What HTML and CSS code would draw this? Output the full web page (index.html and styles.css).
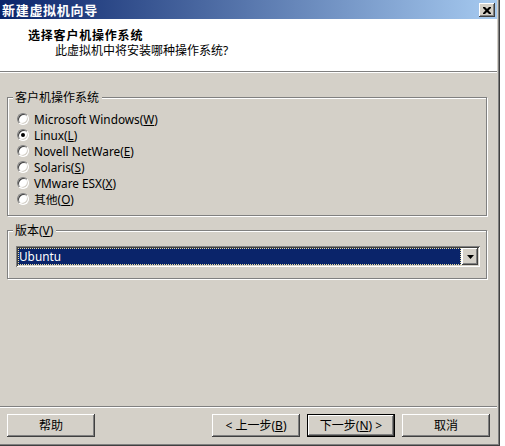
FILE: index.html
```html
<!DOCTYPE html>
<html>
<head>
<meta charset="utf-8">
<link rel="stylesheet" href="styles.css">
</head>
<body>
<div class="window">
  <div class="titlebar">
    <span class="title">新建虚拟机向导</span>
    <span class="close"><svg width="8" height="7" viewBox="0 0 8 7"><path d="M0 0h2l2 2 2-2h2v1l-2.5 2.5L8 6v1H6L4 5 2 7H0V6l2.5-2.5L0 1z" fill="#000"/></svg></span>
  </div>
  <div class="header">
    <div class="h-title">选择客户机操作系统</div>
    <div class="h-sub">此虚拟机中将安装哪种操作系统?</div>
  </div>
  <div class="content">
    <div class="group g1">
      <div class="legend">客户机操作系统</div>
      <div class="radios">
        <div class="radio"><span class="dot"></span><span class="lbl">Microsoft Windows(<u>W</u>)</span></div>
        <div class="radio"><span class="dot on"></span><span class="lbl">Linux(<u>L</u>)</span></div>
        <div class="radio"><span class="dot"></span><span class="lbl">Novell NetWare(<u>E</u>)</span></div>
        <div class="radio"><span class="dot"></span><span class="lbl">Solaris(<u>S</u>)</span></div>
        <div class="radio"><span class="dot"></span><span class="lbl">VMware ESX(<u>X</u>)</span></div>
        <div class="radio"><span class="dot"></span><span class="lbl">其他(<u>O</u>)</span></div>
      </div>
    </div>
    <div class="group g2">
      <div class="legend">版本(<u>V</u>)</div>
      <div class="combo">
        <div class="sel">Ubuntu</div>
        <div class="drop"><svg width="7" height="4" viewBox="0 0 7 4"><path d="M0 0h7L3.5 4z" fill="#000"/></svg></div>
      </div>
    </div>
  </div>
  <div class="footer">
    <div class="btn">帮助</div>
    <div class="spacer"></div>
    <div class="btn">&lt; 上一步(<u>B</u>)</div>
    <div class="btn def">下一步(<u>N</u>) &gt;</div>
    <div class="btn">取消</div>
  </div>
</div>
</body>
</html>
```
FILE: styles.css
```css
html, body {
  margin: 0;
  padding: 0;
  background: #fff;
}
body {
  font-family: "Noto Sans", "Noto Sans CJK SC", sans-serif;
  font-size: 12px;
  color: #000;
}
.window {
  width: 500px;
  height: 446px;
  box-sizing: border-box;
  padding: 0 3px 3px 0;
  background: #d4d0c8;
  box-shadow: inset -1px -1px 0 #404040, inset -2px -2px 0 #808080;
  display: flex;
  flex-direction: column;
}
.titlebar {
  height: 19px;
  flex: none;
  display: flex;
  align-items: flex-start;
  padding: 0 2px 0 2px;
  background: linear-gradient(to right, #0a246a, #a6caf0);
}
.title {
  flex: 1;
  color: #fff;
  font-family: "Noto Sans CJK SC", sans-serif;
  font-weight: bold;
  font-size: 13px;
  letter-spacing: 0.7px;
  line-height: 19px;
}
.close {
  margin-top: 3px;
  width: 16px;
  height: 14px;
  box-sizing: border-box;
  background: #d4d0c8;
  box-shadow: inset -1px -1px 0 #404040, inset 1px 1px 0 #fff, inset -2px -2px 0 #808080;
  display: flex;
  align-items: center;
  justify-content: center;
}
.header {
  height: 53px;
  flex: none;
  box-sizing: border-box;
  background: #fff;
  border-bottom: 1px solid #808080;
  padding: 9px 0 0 28px;
}
.h-title {
  font-family: "Noto Sans CJK SC", sans-serif;
  font-weight: bold;
  font-size: 12px;
  letter-spacing: 0.8px;
  line-height: 14px;
}
.h-sub {
  margin: 2px 0 0 27px;
  font-size: 12px;
  line-height: 14px;
}
.content {
  flex: 1;
  border-top: 1px solid #fff;
  padding: 24px 0 0 7px;
}
.group {
  width: 480px;
  box-sizing: border-box;
  border: 1px solid #808080;
  box-shadow: 1px 1px 0 #fff, inset 1px 1px 0 #fff;
}
.g1 { height: 119px; }
.g2 { height: 49px; margin-top: 14px; }
.legend {
  width: fit-content;
  margin: -7px 0 0 5px;
  padding: 0 3px 0 2px;
  height: 13px;
  line-height: 13px;
  background: #d4d0c8;
  font-size: 12px;
}
.radios {
  margin-top: 7px;
}
.radio {
  height: 16px;
  display: flex;
  align-items: center;
  padding-left: 9px;
}
.dot {
  width: 12px;
  height: 12px;
  box-sizing: border-box;
  border-radius: 50%;
  border: 1px solid;
  border-color: #808080 #fff #fff #808080;
  background: #fff;
  box-shadow: inset 1px 1px 0 #404040, inset -1px -1px 0 #d4d0c8;
  display: flex;
  align-items: center;
  justify-content: center;
}
.dot.on::after {
  content: "";
  width: 4px;
  height: 4px;
  border-radius: 50%;
  background: #000;
}
.lbl {
  margin-left: 5px;
  font-size: 11.8px;
  line-height: 16px;
}
.combo {
  margin: 9px 0 0 8px;
  width: 464px;
  height: 21px;
  box-sizing: border-box;
  padding: 2px;
  background: #fff;
  box-shadow: inset 1px 1px 0 #808080, inset -1px -1px 0 #fff, inset 2px 2px 0 #404040, inset -2px -2px 0 #d4d0c8;
  display: flex;
}
.sel {
  flex: 1;
  margin: 0 1px 0 0;
  box-sizing: border-box;
  border: 1px dotted #e8dc9c;
  background: #0a246a;
  color: #fff;
  font-size: 11.8px;
  line-height: 15px;
  padding-left: 0;
}
.drop {
  width: 16px;
  height: 17px;
  box-sizing: border-box;
  background: #d4d0c8;
  box-shadow: inset -1px -1px 0 #404040, inset 1px 1px 0 #fff, inset -2px -2px 0 #808080;
  display: flex;
  align-items: center;
  justify-content: center;
}
.footer {
  flex: none;
  height: 37px;
  box-sizing: border-box;
  border-top: 1px solid #808080;
  box-shadow: inset 0 1px 0 #fff;
  padding: 7px 7px 0 7px;
  display: flex;
  gap: 7px;
}
.spacer { flex: 1; }
.btn {
  width: 88px;
  height: 23px;
  box-sizing: border-box;
  background: #d4d0c8;
  box-shadow: inset -1px -1px 0 #404040, inset 1px 1px 0 #fff, inset -2px -2px 0 #808080;
  text-align: center;
  line-height: 23px;
  font-size: 12px;
}
.btn.def {
  border: 1px solid #000;
  line-height: 21px;
}
u { text-decoration: underline; text-underline-offset: 1px; }
```
